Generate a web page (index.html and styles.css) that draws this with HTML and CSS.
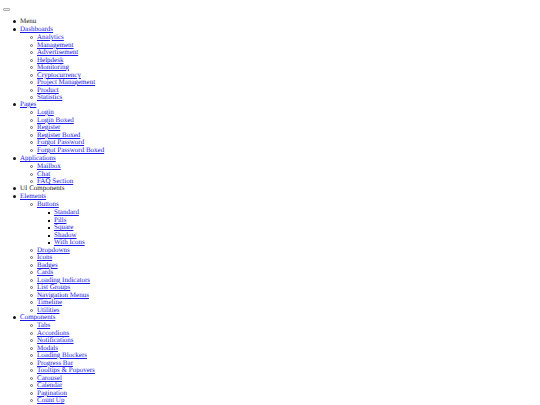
FILE: index.html
```html
<!DOCTYPE html>
<html lang="en">
<head>
<meta charset="utf-8">
<title>Dashboard</title>
<link rel="stylesheet" href="styles.css">
</head>
<body>
<button class="toggle" type="button" aria-label="Toggle menu"></button>
<nav>
<ul class="menu">
  <li>Menu</li>
  <li><a href="#">Dashboards</a>
    <ul>
      <li><a href="#">Analytics</a></li>
      <li><a href="#">Management</a></li>
      <li><a href="#">Advertisement</a></li>
      <li><a href="#">Helpdesk</a></li>
      <li><a href="#">Monitoring</a></li>
      <li><a href="#">Cryptocurrency</a></li>
      <li><a href="#">Project Management</a></li>
      <li><a href="#">Product</a></li>
      <li><a href="#">Statistics</a></li>
    </ul>
  </li>
  <li><a href="#">Pages</a>
    <ul>
      <li><a href="#">Login</a></li>
      <li><a href="#">Login Boxed</a></li>
      <li><a href="#">Register</a></li>
      <li><a href="#">Register Boxed</a></li>
      <li><a href="#">Forgot Password</a></li>
      <li><a href="#">Forgot Password Boxed</a></li>
    </ul>
  </li>
  <li><a href="#">Applications</a>
    <ul>
      <li><a href="#">Mailbox</a></li>
      <li><a href="#">Chat</a></li>
      <li><a href="#">FAQ Section</a></li>
    </ul>
  </li>
  <li>UI Components</li>
  <li><a href="#">Elements</a>
    <ul>
      <li><a href="#">Buttons</a>
        <ul>
          <li><a href="#">Standard</a></li>
          <li><a href="#">Pills</a></li>
          <li><a href="#">Square</a></li>
          <li><a href="#">Shadow</a></li>
          <li><a href="#">With Icons</a></li>
        </ul>
      </li>
      <li><a href="#">Dropdowns</a></li>
      <li><a href="#">Icons</a></li>
      <li><a href="#">Badges</a></li>
      <li><a href="#">Cards</a></li>
      <li><a href="#">Loading Indicators</a></li>
      <li><a href="#">List Groups</a></li>
      <li><a href="#">Navigation Menus</a></li>
      <li><a href="#">Timeline</a></li>
      <li><a href="#">Utilities</a></li>
    </ul>
  </li>
  <li><a href="#">Components</a>
    <ul>
      <li><a href="#">Tabs</a></li>
      <li><a href="#">Accordions</a></li>
      <li><a href="#">Notifications</a></li>
      <li><a href="#">Modals</a></li>
      <li><a href="#">Loading Blockers</a></li>
      <li><a href="#">Progress Bar</a></li>
      <li><a href="#">Tooltips &amp; Popovers</a></li>
      <li><a href="#">Carousel</a></li>
      <li><a href="#">Calendar</a></li>
      <li><a href="#">Pagination</a></li>
      <li><a href="#">Count Up</a></li>
    </ul>
  </li>
</ul>
</nav>
</body>
</html>
```

FILE: styles.css
```css
body {
  margin: 8px 3px 0;
  background: #fff;
  color: #222;
  font-family: "Liberation Serif", serif;
  font-size: 7px;
  line-height: 7px;
  text-rendering: geometricPrecision;
}

.toggle {
  display: block;
  box-sizing: border-box;
  width: 7px;
  height: 3px;
  padding: 0;
  border: 1px solid #b0b0b0;
  border-radius: 1px;
  background: #efefef;
}

.menu,
.menu ul {
  list-style: none;
  padding-left: 17px;
}

.menu {
  margin: 7px 0 0;
}

.menu ul {
  margin: 1px 0 0;
}

.menu li {
  position: relative;
}

.menu li:nth-child(even) {
  margin-top: 1px;
}

/* Markers: disc, then circle, then square by depth */
.menu li::before {
  content: "";
  position: absolute;
  top: 2px;
  left: -7px;
  box-sizing: border-box;
  width: 3px;
  height: 3px;
  border-radius: 50%;
  background: #111;
}

.menu ul li::before {
  border: 1px solid #666;
  background: #fff;
}

.menu ul ul li::before {
  top: 3px;
  left: -6px;
  width: 2px;
  height: 2px;
  border: 0;
  border-radius: 0;
  background: #111;
}

.menu a {
  color: #1a1ae6;
}
```
